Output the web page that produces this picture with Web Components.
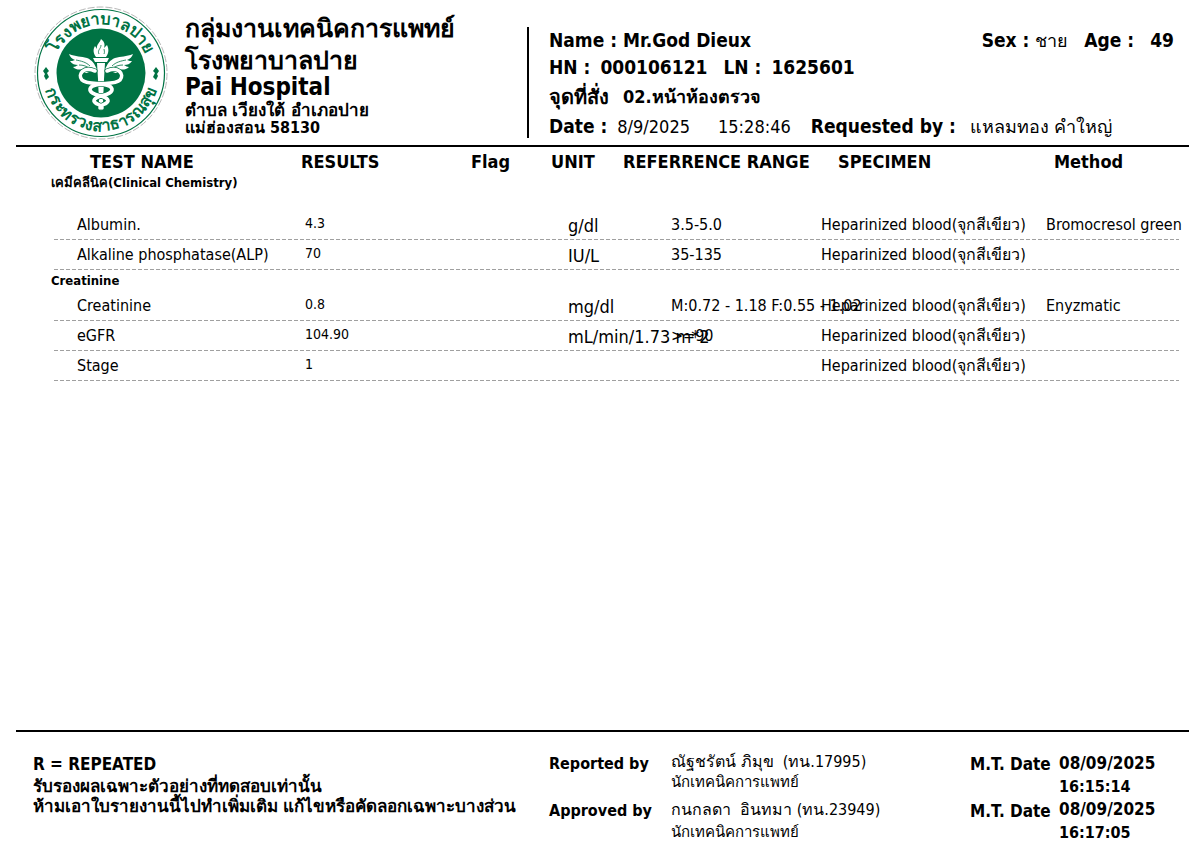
<!DOCTYPE html>
<html lang="th">
<head>
<meta charset="utf-8">
<title>Laboratory report</title>
<style>
  body { margin: 0; background: #fff; color: #000; font-family: "DejaVu Sans Condensed", "Noto Sans", sans-serif; }
</style>
</head>
<body>
<lab-report></lab-report>
<script>
const define = (name, html, setup) => {
  const t = document.createElement('template');
  t.innerHTML = html;
  customElements.define(name, class extends HTMLElement {
    constructor() {
      super();
      this.attachShadow({ mode: 'open' }).append(t.content.cloneNode(true));
      if (setup) setup(this.shadowRoot);
    }
  });
};

define('hospital-seal', `
<style>
  :host { display: block; width: 134px; height: 134px; }
  svg { display: block; width: 100%; height: 100%; }
  text { font-size: 16px; font-weight: 700; fill: #007344; }
</style>
<svg viewBox="-67 -67 134 134" role="img" aria-label="Hospital seal">
  <defs>
    <path id="top" d="M-48.5 0A48.5 48.5 0 0 1 48.5 0"/>
    <path id="bottom" d="M-58 0A58 58 0 0 0 58 0"/>
    <g id="wing">
      <path d="M-4-3C-6-9-9-13-14-15C-20-17-25-16-32-19C-31-16-29-14-26-13C-28-12-30-12-31-12C-29-9-26-8-23-8C-25-7-26-6-28-6C-25-3-21-3-18-4C-19-3-20-2-21-1C-17 1-13 0-10-2Z" fill="#fff"/>
      <path d="M-25-13C-20-12-15-11-11-7M-22-8C-18-8-14-7-11-4" fill="none" stroke="#007344" stroke-width=".8"/>
    </g>
    <path id="snake" d="M-6-2C-17-7-24 1-19 7C-13 13 9 8 11 16C12 23-7 22-7 28C-6 32 1 31 1 35"/>
  </defs>
  <circle r="66" fill="#fff" stroke="#b8b8b8" stroke-width="1" stroke-dasharray="7 2"/>
  <circle r="63.5" fill="none" stroke="#007344" stroke-width="1.2"/>
  <circle r="44.5" fill="#007344"/>
  <text text-anchor="middle"><textPath href="#top" startOffset="50%">โรงพยาบาลปาย</textPath></text>
  <text text-anchor="middle"><textPath href="#bottom" startOffset="50%">กระทรวงสาธารณสุข</textPath></text>
  <g fill="#007344">
    <path d="M-55-6l3 4-2 2 2 4-3 3-2-4 1-2-2-3z"/>
    <path d="M55-6l-3 4 2 2-2 4 3 3 2-4-1-2 2-3z"/>
  </g>
  <use href="#wing"/><use href="#wing" transform="scale(-1 1)"/>
  <g fill="#fff">
    <path d="M0-34C4-31 4-28 3-25L6-28C8-24 8-20 5-16H-5C-8-20-8-24-6-27L-4-24C-5-29-1-30 0-34Z"/>
    <path d="M-8-15H8L6-11H-6ZM-4-10H4L3 6 2 30 0 38-2 30-3 6Z"/>
  </g>
  <path d="M-2-19C-4-23 0-24 0-28M3-19C4-21 3-23 3-24" fill="none" stroke="#007344" stroke-width=".8"/>
  <g fill="none" stroke="#007344" stroke-width="5" stroke-linecap="round"><use href="#snake"/><use href="#snake" transform="scale(-1 1)"/></g>
  <g fill="none" stroke="#fff" stroke-width="3.6" stroke-linecap="round"><use href="#snake"/><use href="#snake" transform="scale(-1 1)"/></g>
</svg>`);

define('hospital-header', `
<style>
  :host { display: flex; padding: 6px 0 0 18px; height: 139px; border-bottom: 2px solid #000; font-weight: 700; }
  .name { width: 342px; margin: 7px 0 0 17px; }
  h1, h2, p { margin: 0; font-size: 25px; line-height: 32px; font-weight: 700; }
  h2.en { font-size: 24px; line-height: 20px; }
  p { font-size: 16px; line-height: 17px; }
  p.first { margin-top: 5px; font-size: 17px; }
  patient-info { flex: 1; margin: 21px 0 7px; }
</style>
<hospital-seal></hospital-seal>
<div class="name">
  <h1>กลุ่มงานเทคนิคการแพทย์</h1>
  <h2>โรงพยาบาลปาย</h2>
  <h2 class="en">Pai Hospital</h2>
  <p class="first">ตำบล เวียงใต้ อำเภอปาย</p>
  <p>แม่ฮ่องสอน 58130</p>
</div>
<patient-info></patient-info>`);

define('patient-info', `
<style>
  :host { display: block; border-left: 2px solid #000; padding-left: 20px; font-size: 19px; line-height: 27px; white-space: nowrap; }
  div { display: flex; }
  .end { margin: 0 15px 0 auto; }
  .ward { line-height: 32px; font-size: 20px; }
  .ward b { margin-left: 14px; font-size: 18px; }
  .plain { font-weight: 400; font-size: 18px; }
  .time { margin: 0 20px 0 28px; }
  .sent { margin-left: 14px; }
  .after { margin-left: 10px; }
  .age { margin-left: 16px; }
</style>
<div><span>Name : Mr.God Dieux</span><span class="end">Sex : <span class="plain">ชาย</span><span class="age">Age :</span><span class="age">49</span></span></div>
<div><span>HN :</span><span class="after">000106121</span><span class="age">LN :</span><span class="after">1625601</span></div>
<div class="ward"><span>จุดที่สั่ง</span><b>02.หน้าห้องตรวจ</b></div>
<div><span>Date :</span><span class="plain after">8/9/2025</span><span class="plain time">15:28:46</span><span>Requested by :</span><span class="plain sent">แหลมทอง คำใหญ่</span></div>`);

const rows = [
  ['Albumin.', '4.3', 'g/dl', '3.5-5.0', 'Bromocresol green'],
  ['Alkaline phosphatase(ALP)', '70', 'IU/L', '35-135', ''],
  'Creatinine',
  ['Creatinine', '0.8', 'mg/dl', 'M:0.72 - 1.18 F:0.55 - 1.02', 'Enyzmatic'],
  ['eGFR', '104.90', 'mL/min/1.73 m*2', '>=90', ''],
  ['Stage', '1', '', '', '']
];

define('result-table', `
<style>
  :host { display: block; padding: 0 10px 0 35px; }
  table { width: 100%; table-layout: fixed; border-collapse: collapse; white-space: nowrap; font-size: 16px; line-height: 20px; }
  th, td { padding: 0; text-align: left; }
  thead th { height: 24px; padding-top: 3px; font-size: 18px; }
  .c0 { padding-left: 26px; }
  thead .c0 { padding-left: 39px; }
  td.c1 { padding: 0 0 4px 4px; font-size: 14px; }
  td.c3 { padding: 2px 0 0 17px; font-size: 18px; }
  td.c4 { padding-left: 48px; }
  thead .c5 { padding-left: 17px; }
  thead .c6 { padding-left: 8px; }
  .section th { height: 21px; font-size: 13px; line-height: 18px; }
  .section.first th { height: 36px; vertical-align: top; }
  .row { height: 30px; background: repeating-linear-gradient(to right, #a0a0a0 0 4px, transparent 4px 6px) right bottom / calc(100% - 3px) 1px no-repeat; }
</style>
<table>
  <colgroup><col style="width:250px"><col style="width:170px"><col style="width:80px"><col style="width:72px"><col style="width:198px"><col style="width:225px"><col style="width:133px"></colgroup>
  <thead><tr><th class="c0">TEST NAME</th><th class="c1">RESULTS</th><th class="c2">Flag</th><th>UNIT</th><th>REFERRENCE RANGE</th><th class="c5">SPECIMEN</th><th class="c6">Method</th></tr></thead>
  <tbody><tr class="section first"><th colspan="7">เคมีคลีนิค(Clinical Chemistry)</th></tr></tbody>
</table>`, root => {
  const body = root.querySelector('tbody');
  for (const r of rows) {
    const tr = body.insertRow();
    if (typeof r === 'string') {
      tr.className = 'section';
      tr.innerHTML = `<th colspan="7">${r}</th>`;
      continue;
    }
    tr.className = 'row';
    [r[0], r[1], '', r[2], r[3], 'Heparinized blood(จุกสีเขียว)', r[4]].forEach((v, i) => {
      const td = tr.insertCell();
      td.className = 'c' + i;
      td.textContent = v;
    });
  }
});

define('report-footer', `
<style>
  :host { display: grid; grid-template-columns: 516fr 122fr 299fr 89fr 130fr; height: 99px; padding: 20px 0 0 17px; border-top: 2px solid #000; font-size: 16px; line-height: 22px; white-space: nowrap; }
  p { margin: 0; }
  .note { font-weight: 700; font-size: 17px; line-height: 20px; }
  .note p:first-child { line-height: 24px; }
  .who { line-height: 20px; white-space: pre-wrap; }
  .who .title { font-size: 15px; }
  .who .title ~ p { margin-top: 8px; }
  .who .title ~ .title { margin-top: 2px; }
  .label b { line-height: 24px; margin-bottom: 23px; }
  .date { font-size: 17px; }
  b { display: block; }
  .stamp b { line-height: 23px; }
</style>
<div class="note"><p>R = REPEATED</p><p>รับรองผลเฉพาะตัวอย่างที่ทดสอบเท่านั้น</p><p>ห้ามเอาใบรายงานนี้ไปทำเพิ่มเติม แก้ไขหรือคัดลอกเฉพาะบางส่วน</p></div>
<div class="label"><b>Reported by</b><b>Approved by</b></div>
<div class="who"><p>ณัฐชรัตน์ ภิมุข  (ทน.17995)</p><p class="title">นักเทคนิคการแพทย์</p><p>กนกลดา  อินทมา (ทน.23949)</p><p class="title">นักเทคนิคการแพทย์</p></div>
<div class="label"><b class="date">M.T. Date</b><b class="date">M.T. Date</b></div>
<div class="stamp"><b class="date">08/09/2025</b><b>16:15:14</b><b class="date">08/09/2025</b><b>16:17:05</b></div>`.replace(/>\n</g, '><'));

define('lab-report', `
<style>
  :host { display: flex; flex-direction: column; min-height: 100vh; padding: 0 12px 0 16px; box-sizing: border-box; }
  report-footer { margin-top: auto; }
</style>
<hospital-header></hospital-header>
<result-table></result-table>
<report-footer></report-footer>`);
</script>
</body>
</html>
